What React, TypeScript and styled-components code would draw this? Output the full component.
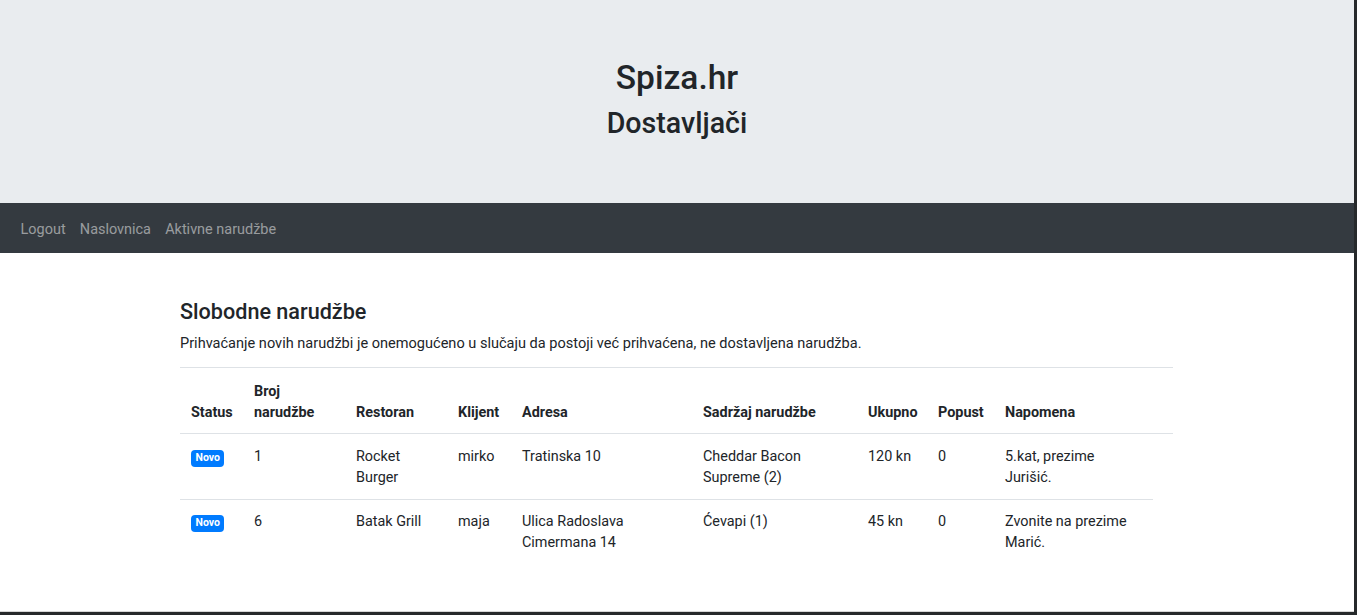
import React from "react";
import styled, { createGlobalStyle } from "styled-components";

const Global = createGlobalStyle`
  html, body { margin: 0; padding: 0; background: #26292b; }
  body { font-family: Roboto, "Noto Sans", "Liberation Sans", sans-serif; color: #212529; }
  * { box-sizing: border-box; }
`;

const Page = styled.div`
  width: 1354px;
  height: 612px;
  background: #fff;
  border-bottom: 1px solid #d6d6d6;
  overflow: hidden;
`;

const Jumbo = styled.header`
  height: 203px;
  background: #e9ecef;
  display: flex;
  flex-direction: column;
  align-items: center;
  padding-top: 58px;
`;

const SiteTitle = styled.h1`
  margin: 0;
  font-size: 33.5px;
  font-weight: 500;
  line-height: 1.2;
`;

const SiteSub = styled.h2`
  margin: 8px 0 0;
  font-size: 28.6px;
  font-weight: 500;
  line-height: 1.2;
`;

const NavBar = styled.nav`
  height: 50px;
  background: #343a40;
  display: flex;
  align-items: center;
  padding: 3px 13.5px 0;
`;

const NavLink = styled.a`
  color: rgba(255, 255, 255, 0.5);
  font-size: 14.45px;
  padding: 8px 7.1px;
  text-decoration: none;
  line-height: 1.5;
`;

const Main = styled.main`
  padding: 46px 0 0 180px;
  width: 1173px;
`;

const Title = styled.h4`
  margin: 0 0 8px;
  font-size: 21.6px;
  font-weight: 500;
  line-height: 1.2;
`;

const Lead = styled.p`
  margin: 0 0 13px;
  font-size: 14.55px;
  line-height: 21px;
`;

const Table = styled.table`
  width: 993px;
  table-layout: fixed;
  border-collapse: collapse;
  font-size: 14.4px;
  line-height: 21px;
`;

const Col = styled.col<{ $w: number }>`
  width: ${(p) => p.$w}px;
`;

const Th = styled.th`
  text-align: left;
  vertical-align: bottom;
  font-weight: 700;
  padding: 13px 11px 10px;
  border-top: 1px solid #dee2e6;
  border-bottom: 1px solid #dee2e6;
`;

const Td = styled.td`
  vertical-align: top;
  padding: 11px 11px 12px;
  border-top: 1px solid #dee2e6;
`;

const Row = styled.tr`
  &:first-child td { border-top: none; padding-top: 12px; padding-bottom: 11px; }
`;

const Badge = styled.span`
  display: inline-block;
  margin-top: 1px;
  background: #007bff;
  color: #fff;
  font-size: 10.5px;
  font-weight: 700;
  line-height: 1;
  padding: 3px 4.5px 3.5px;
  border-radius: 4px;
`;

const widths = [63, 102, 102, 64, 181, 165, 70, 67, 159, 20];

const heads = ["Status", "Broj narudžbe", "Restoran", "Klijent", "Adresa", "Sadržaj narudžbe", "Ukupno", "Popust", "Napomena", ""];

const rows = [
  { id: "1", rest: "Rocket Burger", client: "mirko", addr: "Tratinska 10", items: "Cheddar Bacon Supreme (2)", total: "120 kn", disc: "0", note: "5.kat, prezime Jurišić.", extra: true },
  { id: "6", rest: "Batak Grill", client: "maja", addr: "Ulica Radoslava Cimermana 14", items: "Ćevapi (1)", total: "45 kn", disc: "0", note: "Zvonite na prezime Marić.", extra: false },
];

export default function App() {
  return (
    <>
      <Global />
      <Page>
        <Jumbo>
          <SiteTitle>Spiza.hr</SiteTitle>
          <SiteSub>Dostavljači</SiteSub>
        </Jumbo>
        <NavBar>
          <NavLink href="#">Logout</NavLink>
          <NavLink href="#">Naslovnica</NavLink>
          <NavLink href="#">Aktivne narudžbe</NavLink>
        </NavBar>
        <Main>
          <Title>Slobodne narudžbe</Title>
          <Lead>Prihvaćanje novih narudžbi je onemogućeno u slučaju da postoji već prihvaćena, ne dostavljena narudžba.</Lead>
          <Table>
            <colgroup>
              {widths.map((w, i) => (
                <Col key={i} $w={w} />
              ))}
            </colgroup>
            <thead>
              <tr>
                {heads.map((h, i) => (
                  <Th key={i}>{h}</Th>
                ))}
              </tr>
            </thead>
            <tbody>
              {rows.map((r) => (
                <Row key={r.id}>
                  <Td><Badge>Novo</Badge></Td>
                  <Td>{r.id}</Td>
                  <Td>{r.rest}</Td>
                  <Td>{r.client}</Td>
                  <Td>{r.addr}</Td>
                  <Td>{r.items}</Td>
                  <Td>{r.total}</Td>
                  <Td>{r.disc}</Td>
                  <Td>{r.note}</Td>
                  {r.extra && <Td />}
                </Row>
              ))}
            </tbody>
          </Table>
        </Main>
      </Page>
    </>
  );
}
